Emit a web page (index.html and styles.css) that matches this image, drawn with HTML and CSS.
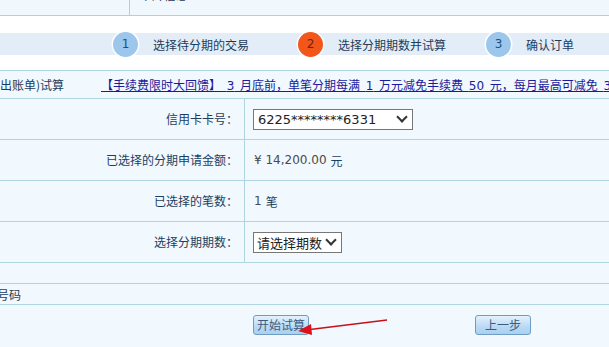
FILE: index.html
```html
<!DOCTYPE html>
<html lang="zh-CN">
<head>
    <meta charset="UTF-8">
    <title>分期试算</title>
    <link rel="stylesheet" href="styles.css">
</head>
<body>
    <div class="top-strip">
        <div class="top-left"></div>
        <div class="top-right"><span>卡片信息</span></div>
    </div>

    <div class="steps">
        <div class="step step-one">
            <span class="circle">1</span>
            <span class="step-text">选择待分期的交易</span>
        </div>
        <div class="step step-two">
            <span class="circle current">2</span>
            <span class="step-text">选择分期期数并试算</span>
        </div>
        <div class="step">
            <span class="circle">3</span>
            <span class="step-text">确认订单</span>
        </div>
    </div>

    <div class="form">
        <div class="row notice-row">
            <span class="notice-title">出账单)试算</span>
            <a class="notice-link" href="#">【手续费限时大回馈】 <span class="d">3</span> 月底前，单笔分期每满 <span class="d">1</span> 万元减免手续费 <span class="d">50</span> 元，每月最高可减免 <span class="d">300</span> 元</a>
        </div>

        <div class="row field-row">
            <div class="label">信用卡卡号：</div>
            <div class="value">
                <div class="select-box card-select">
                    <select>
                        <option>6225********6331</option>
                    </select>
                </div>
            </div>
        </div>

        <div class="row field-row">
            <div class="label">已选择的分期申请金额：</div>
            <div class="value"><span class="num">¥ 14,200.00</span> 元</div>
        </div>

        <div class="row field-row">
            <div class="label">已选择的笔数：</div>
            <div class="value"><span class="num">1</span> 笔</div>
        </div>

        <div class="row field-row">
            <div class="label">选择分期期数：</div>
            <div class="value">
                <div class="select-box term-select">
                    <select>
                        <option>请选择期数</option>
                    </select>
                </div>
            </div>
        </div>

        <div class="row thin-row"></div>
        <div class="row thin-row"><span class="cut-text">号码</span></div>

        <div class="button-row">
            <button class="btn">开始试算</button>
            <button class="btn back-btn">上一步</button>
        </div>
    </div>

    <!-- 标注箭头 -->
    <svg class="arrow" width="609" height="347" viewBox="0 0 609 347">
        <line x1="387" y1="320" x2="306" y2="330" stroke="#c8101a" stroke-width="1.4"/>
        <polygon points="298,331 311,324 312,335" fill="#e0101a"/>
    </svg>
</body>
</html>
```

FILE: styles.css
```css
body {
    margin: 0;
    background: #ffffff;
    font-family: "Noto Sans CJK SC", sans-serif;
    font-size: 12px;
    color: #1d3f5e;
    overflow: hidden;
    width: 609px;
    height: 347px;
    position: relative;
}
.top-strip {
    height: 15px;
    display: flex;
    background: #f1f8fd;
    border-bottom: 1px solid #a9d3e0;
    overflow: hidden;
}
.top-left {
    width: 129px;
    border-right: 1px solid #a9d3e0;
}
.top-right {
    padding-left: 10px;
}
.top-right span {
    display: block;
    margin-top: -13px;
    line-height: 16px;
    color: #2b3b4a;
}
.steps {
    margin-top: 17px;
    height: 22px;
    background: #e3edf7;
    display: flex;
    align-items: center;
    padding-left: 112px;
}
.step {
    display: flex;
    align-items: center;
    gap: 14px;
}
.step-one {
    width: 185px;
}
.step-two {
    width: 188px;
}
.circle {
    width: 25px;
    height: 25px;
    margin: 1px;
    border-radius: 50%;
    background: #9dc6ec;
    box-shadow: 0 0 0 1.5px rgba(255, 255, 255, 0.85);
    color: #20507f;
    font-family: "DejaVu Sans", sans-serif;
    font-size: 12px;
    display: flex;
    align-items: center;
    justify-content: center;
}
.circle.current {
    background: #f2561a;
    color: #6b2810;
}
.step-text {
    color: #1e3c5a;
}
.form {
    margin-top: 15px;
    background: #f1f8fe;
    border-top: 1px solid #aed5e0;
}
.row {
    display: flex;
    border-bottom: 1px solid #aed5e0;
}
.notice-row {
    height: 27px;
    align-items: center;
    overflow: hidden;
}
.notice-title {
    width: 101px;
    flex-shrink: 0;
    color: #1e3c5a;
    white-space: nowrap;
}
.notice-link {
    color: #1b1b9c;
    white-space: nowrap;
    word-spacing: 3px;
}
.notice-link .d {
    font-family: "DejaVu Sans", sans-serif;
    font-size: 12px;
}
.field-row {
    height: 40px;
}
.label {
    width: 238px;
    padding-right: 6px;
    padding-bottom: 2px;
    box-sizing: border-box;
    flex: 0 0 245px;
    border-right: 1px solid #aed5e0;
    text-align: right;
    display: flex;
    align-items: center;
    justify-content: flex-end;
}
.value {
    padding-left: 9px;
    display: flex;
    align-items: center;
    gap: 4px;
}
.num {
    font-family: "DejaVu Sans", sans-serif;
    font-size: 12px;
    color: #4a4a4a;
}
.select-box {
    position: relative;
    height: 21px;
    box-sizing: border-box;
    margin-left: -1px;
}
.select-box select {
    appearance: none;
    -webkit-appearance: none;
    width: 100%;
    height: 21px;
    border: 1px solid #777;
    border-radius: 0;
    background: #ffffff;
    padding: 0 0 0 4px;
    color: #222;
    font-family: "DejaVu Sans", "Noto Sans CJK SC", sans-serif;
    font-size: 13px;
}
.select-box::after {
    content: "";
    position: absolute;
    right: 7px;
    top: 4px;
    width: 6px;
    height: 6px;
    border-right: 2px solid #333;
    border-bottom: 2px solid #333;
    transform: rotate(45deg);
}
.card-select {
    width: 160px;
}
.term-select {
    width: 89px;
}
.term-select select {
    font-family: "Noto Sans CJK SC", sans-serif;
    padding-left: 3px;
}
.thin-row {
    height: 20px;
    align-items: center;
    overflow: hidden;
}
.cut-text {
    margin-left: -3px;
    color: #1e3c5a;
}
.button-row {
    height: 42px;
    padding: 10px 0 0 253px;
    display: flex;
    align-items: flex-start;
    gap: 166px;
}
.btn {
    height: 20px;
    width: 56px;
    padding: 0;
    border: 1px solid #6e9cc4;
    border-radius: 3px;
    background: linear-gradient(to bottom, #e4f1fc, #b9daf4 60%, #a9d0f0);
    color: #3b5b80;
    font-family: "Noto Sans CJK SC", sans-serif;
    font-size: 12px;
    line-height: 18px;
}
.arrow {
    position: absolute;
    left: 0;
    top: 0;
    pointer-events: none;
}
```
